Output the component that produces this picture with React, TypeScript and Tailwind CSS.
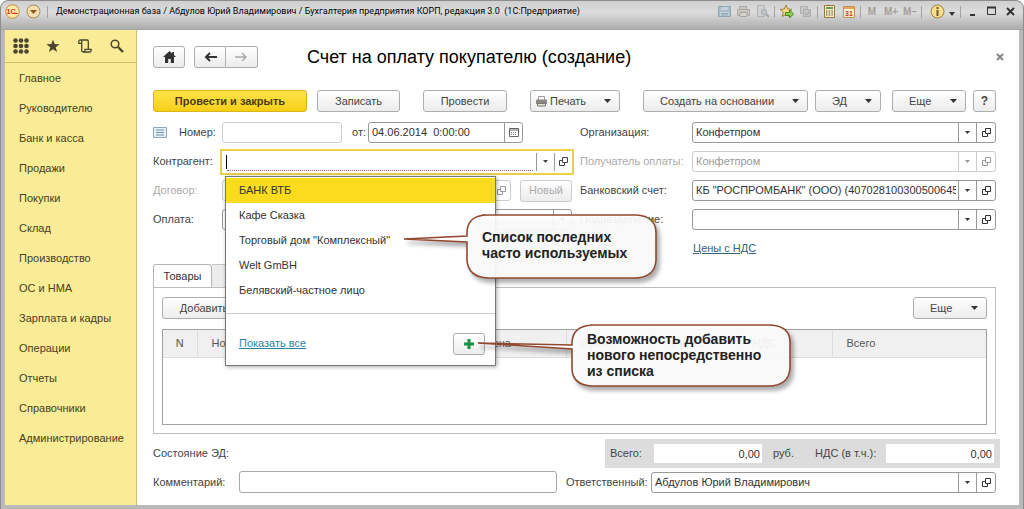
import type { ReactNode } from 'react'
import { clsx } from 'clsx'

const MENU = [
  'Главное', 'Руководителю', 'Банк и касса', 'Продажи', 'Покупки', 'Склад', 'Производство',
  'ОС и НМА', 'Зарплата и кадры', 'Операции', 'Отчеты', 'Справочники', 'Администрирование',
]

const RECENT = ['БАНК ВТБ', 'Кафе Сказка', 'Торговый дом "Комплексный"', 'Welt GmBH', 'Белявский-частное лицо']

export default function App() {
  return (
    <div className="min-h-screen bg-white font-['Liberation_Sans',Arial,sans-serif] text-[11px] text-[#444]">
      <div className="flex min-h-screen flex-col rounded-t-lg border border-[#8d8d8d] bg-[#b9b9b9] px-1 pb-1">
        <TitleBar />
        <div className="flex flex-1">
          <Sidebar />
          <InvoiceForm />
        </div>
      </div>
    </div>
  )
}

function TitleBar() {
  return (
    <header className="-mx-1 flex h-[29px] items-start rounded-t-lg border-b border-[#a5a5a5] bg-linear-to-b from-[#cfcfcf] via-[#dcdcdc] via-40% to-[#adadad] pl-1 text-[#333]">
      <div className="flex h-[21px] min-w-0 flex-1 items-center">
        <button aria-label="Главное меню" className="mr-[6px]"><LogoIcon /></button>
        <button aria-label="Список команд" className="mr-1">
          <svg width="15" height="15" viewBox="0 0 15 15">
            <circle cx="7.5" cy="7.5" r="6.5" fill="#f6dfae" stroke="#a98a5a" />
            <path d="M4 6h7L7.500 10z" fill="#8a5a22" />
          </svg>
        </button>
        <Divider />
        <span className="ml-[6px] truncate font-[Roboto,'Liberation_Sans',sans-serif] text-[9px] text-black">
          Демонстрационная база / Абдулов Юрий Владимирович / Бухгалтерия предприятия КОРП, редакция 3.0&nbsp; (1С:Предприятие)
        </span>
      </div>
      <div className="flex h-[21px] shrink-0 items-center pr-[3px]">
        <ToolButton label="Сохранить">
          <path d="M1.500 2.500h12v10h-12z" fill="#a9bcc8" stroke="#8fa6b5" />
          <path d="M4 3h7v3H4zM3 8h9v4H3z" fill="#c6d3da" />
          <path d="M4 9.500h7M4 11h7" stroke="#90a8b5" />
        </ToolButton>
        <ToolButton label="Печать">
          <path d="M3.500 5V2.500h7V5M1.500 5.500h12v6h-12z" fill="#c9c6c1" stroke="#aaa7a2" />
          <path d="M4 8.500h7v4H4z" fill="#d4d2ce" stroke="#a9a6a1" />
        </ToolButton>
        <ToolButton label="Предварительный просмотр">
          <path d="M2.500 1.500h7v11h-7z" fill="#cfd0d1" stroke="#b0b3b5" />
          <circle cx="9" cy="8" r="2.500" fill="#c3cbd1" stroke="#a0a5aa" />
          <path d="M11 10l3 3" stroke="#a0a5aa" strokeWidth="2" />
        </ToolButton>
        <Divider />
        <ToolButton label="Добавить в избранное">
          <path d="M7 1l1.700 4 4.300.4-3.300 2.900 1 4.200L7 10.300l-3.700 2.200 1-4.200L1 5.400 5.300 5z" fill="#f6d887" stroke="#a07f3c" />
          <path d="M6.500 8.500h4V6l4 4-4 4v-2.500h-4z" fill="#8fd04a" stroke="#3f8a1e" />
        </ToolButton>
        <ToolButton label="Копировать ссылку">
          <path d="M2.500 2.500h7v7h-7z" fill="#c9c9c9" stroke="#adadad" />
          <path d="M5.500 5.500h7v7h-7z" fill="#c3c3c3" stroke="#adadad" />
          <path d="M7 9l2 2 3-4" fill="none" stroke="#a0a0a0" />
        </ToolButton>
        <Divider />
        <ToolButton label="Калькулятор">
          <path d="M2.500 1.500h10v12h-10z" fill="#f7efc0" stroke="#93763c" />
          <path d="M4 3h7v2H4z" fill="#6f9a55" />
          <path d="M4 7h7M4 9h7M4 11h7" stroke="#55503a" strokeDasharray="1.500 1.200" />
        </ToolButton>
        <ToolButton label="Календарь">
          <path d="M2.500 2.500h11v11h-11z" fill="#fbeed2" stroke="#c98d4c" />
          <path d="M3 3h10v2H3z" fill="#e2a45d" />
          <text x="8" y="12" fontSize="7" fontWeight="bold" textAnchor="middle" fill="#c8391f">31</text>
        </ToolButton>
        <Divider />
        <button className="w-[18px] text-[10px] font-bold text-[#a39e99]">M</button>
        <button className="w-[20px] text-[10px] font-bold text-[#a39e99]">M+</button>
        <button className="w-[18px] text-[10px] font-bold text-[#a39e99]">M−</button>
        <Divider />
        <button aria-label="Справка" className="flex items-center gap-1 pr-[3px] pl-[6px]">
          <svg width="15" height="15" viewBox="0 0 15 15">
            <circle cx="7.500" cy="7.500" r="6.500" fill="#f8dd8c" stroke="#a2803e" />
            <path d="M6.500 3h2v2h-2zM6.500 6h2v6h-2z" fill="#6b5a24" />
          </svg>
          <svg width="6" height="4" viewBox="0 0 6 4" className="mt-1"><path d="M0 0h6L3 4z" fill="#333" /></svg>
        </button>
        <Divider />
        <ToolButton label="Свернуть"><path d="M5 11h5" stroke="#333" strokeWidth="2" /></ToolButton>
        <ToolButton label="Развернуть">
          <path d="M3.500 3.500h8v7h-8z" fill="none" stroke="#333" />
          <path d="M3 3.500h9" stroke="#333" strokeWidth="2" />
        </ToolButton>
        <ToolButton label="Закрыть"><path d="M4 4l7 7M11 4l-7 7" stroke="#333" strokeWidth="2" /></ToolButton>
      </div>
    </header>
  )
}

function LogoIcon() {
  return (
    <svg width="15" height="15" viewBox="0 0 15 15">
      <circle cx="7.500" cy="7.500" r="6.800" fill="#fbe9a6" stroke="#c98b3a" />
      <text x="6" y="10" fontSize="7" fontWeight="bold" textAnchor="middle" fill="#d3301c">1С</text>
      <path d="M8.500 9.500h4" stroke="#d3301c" />
    </svg>
  )
}

function Divider() {
  return <span className="mx-[2px] h-3 w-px bg-[#a3a3a3]" />
}

function ToolButton({ label, children }: { label: string; children: ReactNode }) {
  return (
    <button aria-label={label} title={label} className="mx-[2px]">
      <svg width="15" height="15" viewBox="0 0 15 15">{children}</svg>
    </button>
  )
}

function Sidebar() {
  return (
    <aside className="w-[132px] shrink-0 border-r border-[#c9bd75] bg-[#faeb96]">
      <div className="flex h-[33px] items-center border-b border-[#cdbf6c] text-[#4b4630]">
        <button aria-label="Разделы" className="flex w-8 justify-center">
          <svg width="16" height="16" viewBox="0 0 16 16" fill="currentColor">
            {[2.5, 8, 13.5].map(y => [2.5, 8, 13.5].map(x => <circle key={`${x}-${y}`} cx={x} cy={y} r="2.300" />))}
          </svg>
        </button>
        <button aria-label="Избранное" className="flex w-8 justify-center">
          <svg width="14" height="14" viewBox="0 0 14 14" fill="currentColor">
            <path d="M7 .5l1.700 4.600 4.900.2-3.900 3 1.400 4.800L7 10.300l-4.100 2.800 1.400-4.800-3.900-3 4.900-.2z" />
          </svg>
        </button>
        <button aria-label="История" className="flex w-8 justify-center">
          <svg width="14" height="14" viewBox="0 0 14 14" fill="none" stroke="currentColor" strokeWidth="1.300">
            <path d="M3.700 4.300H.8V2.500Q.8 1 2.300 1H9.200Q10.300 1 10.300 2.200V10.300H13.200V11.500Q13.200 13 11.800 13H5.200Q3.700 13 3.700 11.500V2.500Q3.700 1 2.300 1" />
            <path d="M10.300 10.300H7V11.500Q7 13 5.200 13" />
          </svg>
        </button>
        <button aria-label="Поиск" className="flex w-8 justify-center">
          <svg width="14" height="14" viewBox="0 0 14 14" fill="none" stroke="currentColor">
            <circle cx="5" cy="5" r="3.800" strokeWidth="1.500" />
            <path d="M8 8l5 5" strokeWidth="2.400" />
          </svg>
        </button>
      </div>
      <nav>
        {MENU.map(item => (
          <a key={item} href="#" className="flex h-[30px] items-center pl-[14px] text-[#46411f]">{item}</a>
        ))}
      </nav>
    </aside>
  )
}

function InvoiceForm() {
  return (
    <main className="flex min-w-0 flex-1 flex-col bg-white pt-4 pr-[23px] pb-3 pl-4">
      <div className="flex h-[22px] items-center">
        <Button className="w-8" label="Начальная страница">
          <svg width="13" height="12" viewBox="0 0 13 12" fill="#333"><path d="M6.500 0L0 6h2v6h3.200V8h2.600v4H11V6h2l-2-1.900V1H9.200v1.500z" /></svg>
        </Button>
        <div className="ml-[9px] flex">
          <Button className="w-8 rounded-r-none" label="Назад">
            <svg width="13" height="10" viewBox="0 0 13 10"><path d="M13 5H2M6 1L2 5l4 4" fill="none" stroke="#333" strokeWidth="2" /></svg>
          </Button>
          <Button className="w-8 rounded-l-none border-l-0" label="Вперед">
            <svg width="13" height="10" viewBox="0 0 13 10"><path d="M0 5h11M7 1l4 4-4 4" fill="none" stroke="#aaa" strokeWidth="1.500" /></svg>
          </Button>
        </div>
        <h1 className="ml-[49px] text-lg leading-[22px] text-black">Счет на оплату покупателю (создание)</h1>
        <button aria-label="Закрыть форму" className="-mr-2 ml-auto">
          <svg width="8" height="8" viewBox="0 0 8 8"><path d="M1 1l6 6M7 1L1 7" stroke="#888" strokeWidth="2" /></svg>
        </button>
      </div>

      <div className="mt-[22px] flex">
        <button className="h-[22px] w-[154px] rounded-[3px] border border-[#d9b51c] bg-linear-to-b from-[#ffe347] to-[#f6cf12] font-bold text-[#4a3d10]">
          Провести и закрыть
        </button>
        <Button className="ml-[10px] w-[83px]">Записать</Button>
        <Button className="ml-[23px] w-[84px]">Провести</Button>
        <Button className="ml-[23px] w-[90px] pr-2 pl-1" spread>
          <span className="flex items-center gap-[2px]"><PrinterIcon />Печать</span>
          <Caret />
        </Button>
        <Button className="ml-auto w-[165px] pr-2 pl-4" spread>Создать на основании<Caret /></Button>
        <Button className="ml-[7px] w-[66px] pr-2 pl-4" spread>ЭД<Caret /></Button>
        <Button className="ml-[11px] w-[74px] pr-2 pl-4" spread>Еще<Caret /></Button>
        <Button className="ml-[7px] w-[23px] text-[12px] font-bold" label="Справка">?</Button>
      </div>

      <div className="mt-[10px] grid grid-cols-[421fr_416fr] gap-[6px]">
        <div className="flex flex-col gap-2 pr-[2px]">
          <div className="flex h-[21px] items-center">
            <svg width="14" height="11" viewBox="0 0 14 11" className="mr-3">
              <path d="M.5.5h13v10H.5z" fill="#e6f0f5" stroke="#8aa7b8" />
              <path d="M3 3h8M3 5.500h8M3 8h8" stroke="#6f93a8" />
            </svg>
            <label htmlFor="number" className="w-[43px]">Номер:</label>
            <input id="number" className="h-[21px] w-[120px] rounded-[3px] border border-[#cfcfcf] px-1" />
            <label htmlFor="date" className="w-[26px] pl-[10px]">от:</label>
            <div className="flex h-[21px] w-[155px] rounded-[3px] border border-[#999]">
              <input id="date" defaultValue="04.06.2014  0:00:00" className="min-w-0 flex-1 px-[3px] whitespace-pre text-[#333]" />
              <button aria-label="Выбрать дату" className="flex w-[18px] items-center justify-center border-l border-[#999]">
                <svg width="10" height="9" viewBox="0 0 10 9">
                  <path d="M.5.5h9v8h-9z" fill="#fff" stroke="#666" />
                  <path d="M1 2h8" stroke="#666" />
                  <path d="M2 4.500h6M2 6.500h6" stroke="#777" strokeDasharray="1 1" />
                </svg>
              </button>
            </div>
          </div>
          <div className="flex h-[21px] items-center">
            <label htmlFor="partner" className="w-[69px] shrink-0">Контрагент:</label>
            <div className="relative flex h-[22px] min-w-0 flex-1 bg-white outline-2 outline-[#ecd04a]">
              <div className="flex min-w-0 flex-1 items-center pl-1">
                <span className="h-[14px] w-px bg-black" />
                <input id="partner" role="combobox" aria-expanded="true" aria-controls="recent" className="mt-[3px] mr-[3px] h-[16px] min-w-0 flex-1 border-b border-dotted border-[#b0605a] outline-none" />
              </div>
              <button aria-label="Открыть список" className="my-[2px] flex w-[18px] items-center justify-center border-l border-[#999]"><SmallCaret /></button>
              <button aria-label="Открыть" className="my-[2px] flex w-[18px] items-center justify-center border-l border-[#999]"><OpenIcon /></button>
              <RecentList />
            </div>
          </div>
          <div className="flex h-[21px] items-center">
            <label htmlFor="contract" className="w-[69px] shrink-0 text-[#aaa]">Договор:</label>
            <SelectField id="contract" disabled />
            <Button className="ml-[9px] w-[52px] border-[#ccc] text-[#aaa]" disabled>Новый</Button>
          </div>
          <div className="flex h-[21px] items-center">
            <label htmlFor="payment" className="w-[69px] shrink-0">Оплата:</label>
            <SelectField id="payment" noOpen />
          </div>
        </div>

        <div className="flex flex-col gap-2">
          <FormRow id="org" label="Организация:" value="Конфетпром" />
          <FormRow id="payee" label="Получатель оплаты:" value="Конфетпром" disabled />
          <FormRow id="account" label="Банковский счет:" value={'КБ "РОСПРОМБАНК" (ООО) (40702810030050064512)'} />
          <FormRow id="department" label="Подразделение:" />
          <div className="flex h-[21px] items-center pl-[113px]">
            <a href="#" className="text-[#35607f] underline">Цены с НДС</a>
          </div>
        </div>
      </div>

      <div className="mt-[5px] flex">
        <button className="-mb-px h-6 w-[59px] rounded-t-[3px] border border-b-0 border-[#b5b5b5] bg-white text-[#333]">Товары</button>
        <button className="h-[23px] w-[70px] border border-b-0 border-l-0 border-[#c5c5c5] bg-[#ececec]" aria-label="Услуги" />
      </div>
      <section className="flex flex-1 flex-col border border-[#bdbdbd] px-2 pt-[9px] pb-2">
        <div className="flex justify-between">
          <Button className="w-[84px]">Добавить</Button>
          <Button className="w-[74px] pr-2 pl-4" spread>Еще<Caret /></Button>
        </div>
        <div className="mt-[10px] min-h-[96px] flex-1 border border-[#a0a0a0]">
          <table className="w-full table-fixed text-left">
            <thead>
              <tr className="h-[27px] border-b border-[#ddd] bg-[#f0f0f0] text-[#555]">
                <th className="w-[34px] border-r border-[#ddd] text-center font-normal">N</th>
                <th className="border-r border-[#ddd] pl-[14px] font-normal">Номенклатура</th>
                <th className="w-[96px] border-r border-[#ddd] pl-[14px] font-normal">Цена</th>
                <th className="w-[86px] border-r border-[#ddd] pl-[14px] font-normal">Сумма</th>
                <th className="w-[86px] border-r border-[#ddd] pl-[14px] font-normal">% НДС</th>
                <th className="w-[94px] border-r border-[#ddd] pl-[14px] font-normal">НДС</th>
                <th className="w-[154px] pl-[14px] font-normal">Всего</th>
              </tr>
            </thead>
          </table>
        </div>
      </section>

      <div className="mt-[5px] flex h-[29px] items-center justify-between">
        <span>Состояние ЭД:</span>
        <div className="-mr-1 flex h-[29px] items-center bg-[#dcdcdc] pr-[6px] pl-[5px]">
          <label htmlFor="total" className="w-[44px]">Всего:</label>
          <input id="total" defaultValue="0,00" className="h-[19px] w-[108px] bg-white px-[2px] text-right text-[#333]" />
          <span className="ml-[11px] w-[42px]">руб.</span>
          <label htmlFor="vat" className="w-[71px] whitespace-nowrap">НДС (в т.ч.):</label>
          <input id="vat" defaultValue="0,00" className="h-[19px] w-[108px] bg-white px-[2px] text-right text-[#333]" />
        </div>
      </div>
      <div className="mt-[3px] flex items-center">
        <label htmlFor="comment" className="w-[86px]">Комментарий:</label>
        <input id="comment" className="h-[22px] min-w-0 flex-1 rounded-[3px] border border-[#a9a9a9] px-1" />
        <label htmlFor="manager" className="w-[94px] pl-[9px]">Ответственный:</label>
        <div className="flex w-[345px]"><SelectField id="manager" value="Абдулов Юрий Владимирович" /></div>
      </div>
    </main>
  )
}

function RecentList() {
  return (
    <div className="absolute top-[25px] left-[3px] z-10 w-[271px] border border-[#777] bg-white pt-px shadow-[1px_1px_4px_rgba(0,0,0,0.35)]">
      <ul id="recent" role="listbox">
        {RECENT.map((name, i) => (
          <li
            key={name}
            role="option"
            aria-selected={i === 0}
            className={clsx('relative flex h-[25px] items-center pl-[13px] text-[#333]', i === 0 && 'bg-[#fadb1e]')}
          >
            {name}
            {i === 2 && (
              <Callout
                className="top-[-15px] left-[176px] z-20 h-[76px] w-[264px]"
                path="M80 2H234Q254 3 254 20V47Q253 65 232 65H86Q66 64 65 47V29L2 26 65 23V20Q65 3 84 2Z"
                textClass="pt-4 pl-[80px]"
                lines={['Список последних', 'часто используемых']}
              />
            )}
          </li>
        ))}
      </ul>
      <div className="mt-[10px] flex h-[52px] items-center justify-between border-t border-[#ccc] pt-[10px] pr-[10px] pb-[1px] pl-[13px]">
        <a href="#" className="text-[#2a8499] underline">Показать все</a>
        <div className="relative flex">
          <Button className="w-8" label="Добавить">
            <svg width="10" height="10" viewBox="0 0 10 10"><path d="M5 0v10M0 5h10" stroke="#149247" strokeWidth="3" /></svg>
          </Button>
          <Callout
            className="top-[-10px] left-[23px] z-20 h-[76px] w-[324px]"
            path="M114 2H294Q314 3 314 19V45Q313 63 292 63H116Q96 62 96 45V26L2 20 96 22V19Q97 3 116 2Z"
            textClass="pt-2 pl-[111px]"
            lines={['Возможность добавить', 'нового непосредственно', 'из списка']}
          />
        </div>
      </div>
    </div>
  )
}

interface CalloutProps {
  className: string
  path: string
  textClass: string
  lines: string[]
}

function Callout({ className, path, textClass, lines }: CalloutProps) {
  return (
    <div className={clsx('pointer-events-none absolute', className)}>
      <svg className="absolute inset-0 h-full w-full overflow-visible drop-shadow-[3px_4px_2px_rgba(0,0,0,0.35)]">
        <path d={path} fill="#fff" fillOpacity="0.92" stroke="#91492f" strokeWidth="1.600" />
      </svg>
      <p className={clsx('relative text-[14px] leading-4 font-bold whitespace-nowrap text-[#222]', textClass)}>
        {lines.map(line => <span key={line} className="block">{line}</span>)}
      </p>
    </div>
  )
}

interface ButtonProps {
  className?: string
  label?: string
  disabled?: boolean
  spread?: boolean
  children: ReactNode
}

function Button({ className, label, disabled, spread, children }: ButtonProps) {
  return (
    <button
      aria-label={label}
      disabled={disabled}
      className={clsx(
        'flex h-[22px] shrink-0 items-center rounded-[3px] border bg-linear-to-b from-white to-[#ececec] whitespace-nowrap',
        spread ? 'justify-between' : 'justify-center',
        !disabled && 'border-[#adadad] text-[#444]',
        className,
      )}
    >
      {children}
    </button>
  )
}

interface FieldProps {
  id: string
  value?: string
  disabled?: boolean
  noOpen?: boolean
}

function SelectField({ id, value = '', disabled, noOpen }: FieldProps) {
  const line = disabled ? 'border-[#ccc]' : 'border-[#999]'
  return (
    <div className={clsx('flex h-[21px] min-w-0 flex-1 rounded-[3px] border bg-white', line, disabled ? 'text-[#999]' : 'text-[#333]')}>
      <div className="grid min-w-0 flex-1 grid-cols-[minmax(0,1fr)_18px]">
        <select id={id} disabled={disabled} className="col-span-2 col-start-1 row-start-1 appearance-none overflow-hidden pr-5 pl-[3px] opacity-100">
          <option>{value}</option>
        </select>
        <span className={clsx('pointer-events-none col-start-2 row-start-1 flex items-center justify-center border-l', line)}><SmallCaret /></span>
      </div>
      {!noOpen && (
        <button aria-label="Открыть" disabled={disabled} className={clsx('flex w-[19px] items-center justify-center border-l', line)}><OpenIcon /></button>
      )}
    </div>
  )
}

function FormRow({ label, ...field }: FieldProps & { label: string }) {
  return (
    <div className="flex h-[21px] items-center">
      <label htmlFor={field.id} className={clsx('w-[112px] shrink-0 whitespace-nowrap', field.disabled && 'text-[#aaa]')}>{label}</label>
      <SelectField {...field} />
    </div>
  )
}

function Caret() {
  return <svg width="7" height="4" viewBox="0 0 7 4"><path d="M0 0h7L3.500 4z" fill="#333" /></svg>
}

function SmallCaret() {
  return <svg width="5" height="3" viewBox="0 0 5 3"><path d="M0 0h5L2.500 3z" fill="currentColor" /></svg>
}

function OpenIcon() {
  return (
    <svg width="9" height="9" viewBox="0 0 9 9" fill="none" stroke="currentColor">
      <path d="M3.500.5h5v5h-5z" />
      <path d="M3.500 3.500h-3v5h5v-3" />
    </svg>
  )
}

function PrinterIcon() {
  return (
    <svg width="13" height="12" viewBox="0 0 13 12">
      <path d="M3.500 5V1.500h6V5" fill="#fff" stroke="#999" />
      <path d="M1 5.500q0-1 1-1h9q1 0 1 1V9H1z" fill="#8a8783" />
      <path d="M2.500 8.500h8v2.500h-8z" fill="#e9e3d6" stroke="#777" />
    </svg>
  )
}
